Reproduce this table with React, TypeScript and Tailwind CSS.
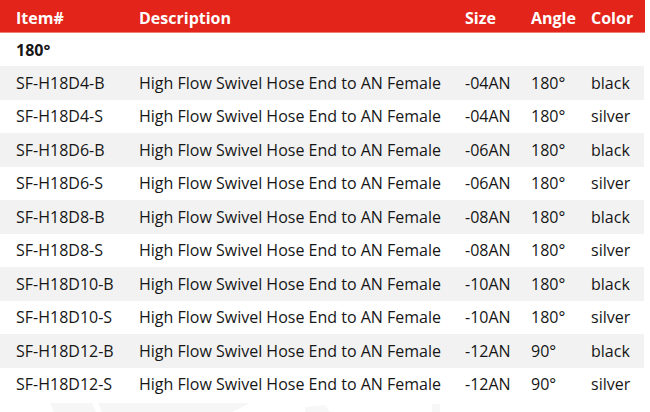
const rows = [
  ["SF-H18D4-B", "-04AN", "180°", "black"],
  ["SF-H18D4-S", "-04AN", "180°", "silver"],
  ["SF-H18D6-B", "-06AN", "180°", "black"],
  ["SF-H18D6-S", "-06AN", "180°", "silver"],
  ["SF-H18D8-B", "-08AN", "180°", "black"],
  ["SF-H18D8-S", "-08AN", "180°", "silver"],
  ["SF-H18D10-B", "-10AN", "180°", "black"],
  ["SF-H18D10-S", "-10AN", "180°", "silver"],
  ["SF-H18D12-B", "-12AN", "90°", "black"],
  ["SF-H18D12-S", "-12AN", "90°", "silver"],
];

const cols = "grid grid-cols-[123px_326px_66px_60px_70px] items-center";

export default function App() {
  return (
    <div className="relative w-[650px] h-[412px] overflow-hidden bg-white font-['Open_Sans',sans-serif] text-[16px] text-[#161616]">
      {/* faint watermark */}
      <svg className="absolute left-0 top-[401px]" width="650" height="11" viewBox="0 0 650 11">
        <path d="M50 2 L92 2 L96 11 L54 11 Z" fill="#f6f6f6" />
        <path d="M98 2 L250 2 L232 11 L102 11 Z" fill="#f6f6f6" />
        <path d="M305 6 L325 4 L330 11 L305 11 Z" fill="#f7f7f7" />
        <rect x="432" y="3" width="8" height="8" fill="#f7f7f7" />
      </svg>

      <div className="relative w-[645px]">
        {/* Header */}
        <div className={`${cols} h-[33px] pt-[4px] bg-[#e3241a] border-b border-[#ee7f77] text-white font-bold`}>
          <div className="pl-4">Item#</div>
          <div className="pl-4">Description</div>
          <div className="pl-4">Size</div>
          <div className="pl-4">Angle</div>
          <div className="pl-4">Color</div>
        </div>

        {/* Group */}
        <div className="h-[33px] flex items-center pt-[1px] pl-4 font-bold">180°</div>

        {rows.map((r, i) => (
          <div
            key={r[0]}
            className={`${cols} h-[33.5px] w-[644px] ${i % 2 === 0 ? "bg-[#f2f2f2]" : "bg-white"}`}
          >
            <div className="pl-4">{r[0]}</div>
            <div className="pl-4">High Flow Swivel Hose End to AN Female</div>
            <div className="pl-4">{r[1]}</div>
            <div className="pl-4">{r[2]}</div>
            <div className="pl-4">{r[3]}</div>
          </div>
        ))}
      </div>
    </div>
  );
}
